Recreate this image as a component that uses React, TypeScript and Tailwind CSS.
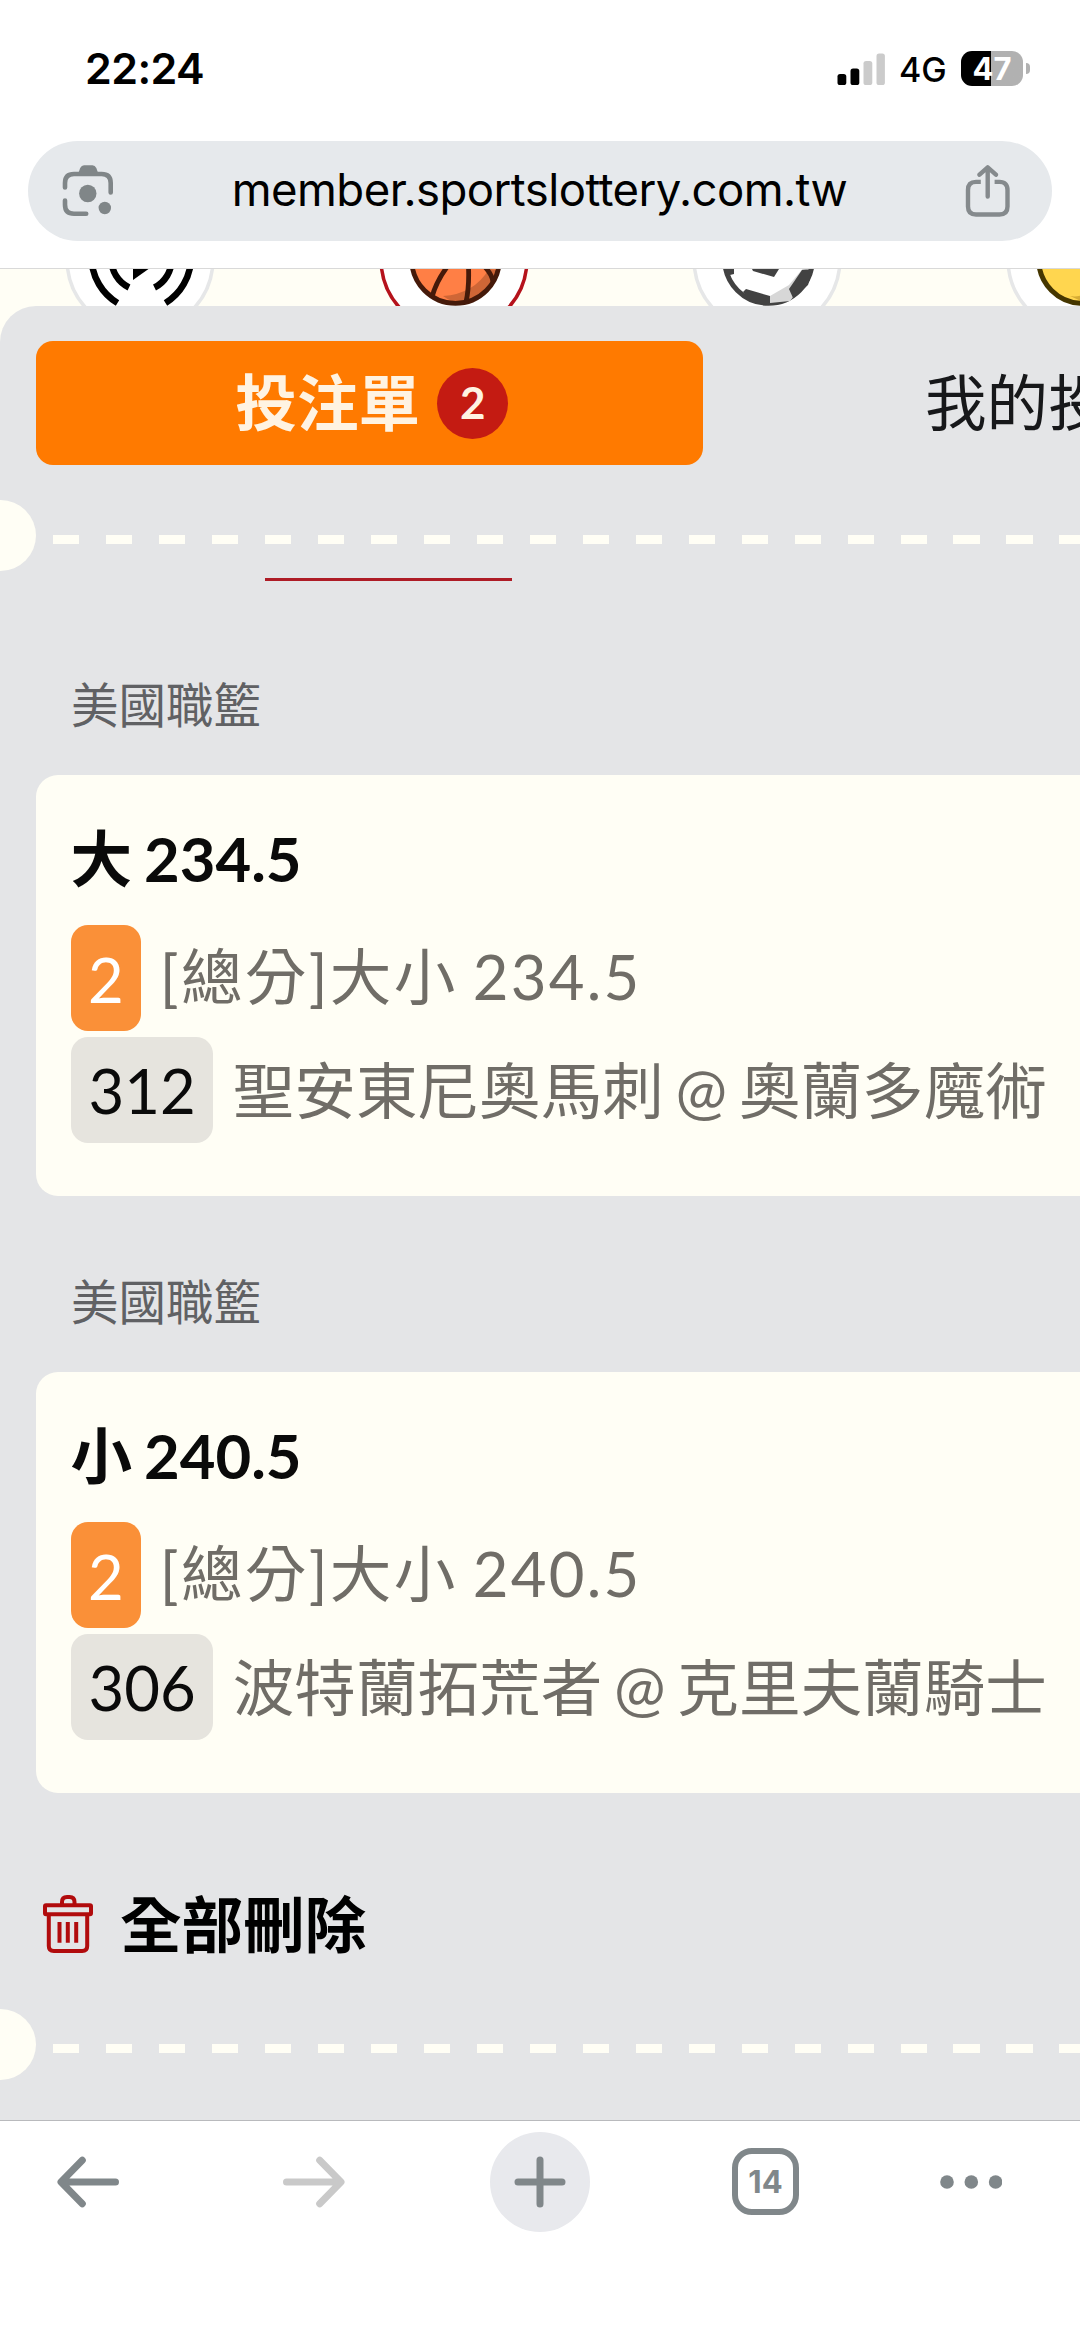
import type { ReactNode } from "react";

type Bet = {
  league: string;
  pick: string;
  count: number;
  market: string;
  code: string;
  match: string;
};

const BETS: Bet[] = [
  {
    league: "美國職籃",
    pick: "大 234.5",
    count: 2,
    market: "[總分]大小 234.5",
    code: "312",
    match: "聖安東尼奧馬刺 @ 奧蘭多魔術",
  },
  {
    league: "美國職籃",
    pick: "小 240.5",
    count: 2,
    market: "[總分]大小 240.5",
    code: "306",
    match: "波特蘭拓荒者 @ 克里夫蘭騎士",
  },
];

const StatusBar = () => (
  <div className="flex h-[141px] items-start justify-between pt-[46px] pr-[50px] pl-[85px] text-black">
    <span className="text-[43px] leading-[45px] font-semibold tracking-[-0.6px]">22:24</span>
    <div className="flex h-[45px] items-center">
      <svg width="48" height="32" viewBox="0 0 48 32">
        <rect x="0.5" y="21" width="8.8" height="11" rx="2.6" />
        <rect x="13.5" y="15.5" width="8.8" height="16.5" rx="2.6" />
        <rect x="26.5" y="8" width="8.8" height="24" rx="2.6" fill="#cbcbcb" />
        <rect x="39.5" y="0.5" width="8.4" height="31.5" rx="2.6" fill="#cbcbcb" />
      </svg>
      <span className="ml-[14px] w-[48px] pt-[3px] text-[34px] leading-none font-medium">4G</span>
      <div className="ml-[14px] flex h-[35px] w-[62px] items-center justify-center rounded-[11px] bg-linear-to-r from-black from-[49%] to-[#b1b1b1] to-[49%] text-[31px] leading-none font-bold text-white">
        47
      </div>
      <div className="ml-[3px] h-[11px] w-[4px] rounded-r-full bg-[#b1b1b1]" />
    </div>
  </div>
);

const LensIcon = () => (
  <svg width="52" height="52" viewBox="0 0 52 52" fill="none" stroke="#808688" strokeWidth="4.6" strokeLinecap="round">
    <path d="M3 22.5V18Q3 9 12 9H39.600Q48.700 9 48.700 18V27.500" />
    <path d="M3 35.500V39.800Q3 48.800 12 48.800H24.200" />
    <path d="M15.500 10.500L18.200 3Q19.500 .3 22 .3H30.500Q33 .3 34.300 3L37 10.500Z" fill="#808688" stroke="none" />
    <circle cx="25.800" cy="28.500" r="8.700" fill="#808688" stroke="none" />
    <circle cx="42.800" cy="43" r="6.200" fill="#808688" stroke="none" />
  </svg>
);

const ShareIcon = () => (
  <svg width="46" height="53" viewBox="0 0 46 53" fill="none" stroke="#858a8d" strokeWidth="4.4" strokeLinecap="round">
    <path
      d="M15.800 16.900H11Q3 16.900 3 25V41.500Q3 49.500 11 49.500H34.500Q42.500 49.500 42.500 41.500V25Q42.500 16.900 34.500 16.900H29.600"
      strokeLinecap="butt"
    />
    <path d="M22.700 3V31.500M14.500 9.700L22.700 2.300L30.900 9.700" strokeLinejoin="round" />
  </svg>
);

const AddressBar = () => (
  <div className="mx-[28px] flex h-[100px] items-center justify-between rounded-full bg-[#e6e9ec] pr-[41px] pl-[34px]">
    <LensIcon />
    <span className="pb-[2px] text-[45.500px] leading-none tracking-[-0.540px] text-black">
      member.sportslottery.com.tw
    </span>
    <ShareIcon />
  </div>
);

// Round sport button, only its lower edge shows under the address bar
const SportButton = ({ active = false, children }: { active?: boolean; children: ReactNode }) => (
  <svg width="150" height="37" viewBox="0 85 150 37" className="shrink-0">
    <circle cx="75" cy="75" r="73" fill="#fff" stroke={active ? "#b5121b" : "#e6e7e8"} strokeWidth="3.500" />
    {children}
  </svg>
);

const SportsStrip = () => (
  <div className="flex h-[38px] gap-[163.500px] overflow-hidden border-t border-[#d9d9d9] bg-[#fffef5] pl-[65px]">
    <SportButton>
      <g fill="none" stroke="#000" strokeWidth="6.500">
        <path d="M26.500 75A54 54 0 0 0 52.500 119" />
        <path d="M126 75A54 54 0 0 1 100.500 119" />
        <path d="M46.500 75A31 31 0 0 0 64 103.500" />
        <path d="M106.500 75A31 31 0 0 1 89.500 103.500" />
      </g>
      <path d="M68 55V96L92 79Z" />
    </SportButton>
    <SportButton active>
      <circle cx="76.500" cy="75.500" r="43.800" fill="#ff7f45" />
      <path d="M110 85Q95 110 64 112Q72 118 80 118Q112 114 118 86Z" fill="#cf6636" />
      <g fill="none" stroke="#451a0a" strokeWidth="4.800">
        <circle cx="76.500" cy="75.500" r="43.800" />
        <path d="M68 83Q57 98 53 113" />
        <path d="M89 75Q91 100 87 118" />
        <path d="M105 82Q113 90 114 98" />
      </g>
    </SportButton>
    <SportButton>
      <circle cx="76.500" cy="75.500" r="43.800" fill="#fff" stroke="#424242" strokeWidth="5" />
      <path d="M78 112L97 101L113 82L118 92L98 117L78 119Z" fill="#d7d7d7" />
      <path d="M60 85H87L82 93L61 87Z" fill="#424242" />
      <path d="M32 85H42V90L38 91L42 103Z" fill="#424242" />
      <path d="M54 105L78 112V121L60 118L51 108Z" fill="#424242" />
      <path d="M97 105L110 86L121 85L116 101L101 114Z" fill="#424242" />
    </SportButton>
    <SportButton>
      <circle cx="76.500" cy="75.500" r="43.800" fill="#ffd64f" />
      <path d="M64 112Q76 114 84 106V121Z" fill="#d6ac35" />
      <circle cx="76.500" cy="75.500" r="43.800" fill="none" stroke="#453600" strokeWidth="5" />
    </SportButton>
  </div>
);

// Ticket style divider with a half circle notch on the left edge
const TicketDivider = () => (
  <div className="flex h-[71px] items-center">
    <div className="h-[71px] w-[35.500px] shrink-0 rounded-r-full bg-[#fffef5]" />
    <div className="mt-[8px] ml-[17px] h-[9px] flex-1 bg-[repeating-linear-gradient(90deg,#fffef5_0_26.500px,transparent_26.500px_52.970px)]" />
  </div>
);

const BetCard = ({ bet }: { bet: Bet }) => (
  <section className="h-[597.300px] pl-[35.500px]">
    <h3 className="h-[100px] pl-[35.500px] text-[47.500px] leading-[60px] text-[#606164]">{bet.league}</h3>
    <div className="h-[420.500px] rounded-l-[22px] bg-[#fffef5] pt-[52px] pl-[35px]">
      <p className="text-[61.600px] leading-[62px] font-bold [word-spacing:-3px] text-[#0a0a0a]">{bet.pick}</p>
      <div className="mt-[36px] flex h-[106px] items-center">
        <span className="rounded-[17px] bg-[#fa9038] px-[17.500px] pt-[2px] text-[61.600px] leading-[104px] text-white">
          {bet.count}
        </span>
        <span className="ml-[18.500px] pb-[4px] text-[61.600px] leading-[102px] tracking-[2.300px] [word-spacing:-3px] whitespace-nowrap text-[#706d67]">
          {bet.market}
        </span>
      </div>
      <div className="mt-[6px] flex h-[106px] items-center">
        <span className="rounded-[17px] bg-[#e6e4de] pr-[17px] pl-[18px] text-[61.600px] leading-[106px] text-[#0a0a0a]">
          {bet.code}
        </span>
        <span className="ml-[20px] text-[61.600px] leading-[106px] [word-spacing:-4px] whitespace-nowrap text-[#706d67]">
          {bet.match}
        </span>
      </div>
    </div>
  </section>
);

const TrashIcon = () => (
  <svg width="50" height="58" viewBox="0 0 50 58" fill="none" stroke="#b10b0d" strokeWidth="4">
    <path d="M19 10V7Q19 2 24 2H26.500Q31.500 2 31.500 7V10" />
    <rect x="2" y="10.300" width="46" height="9" rx="1" />
    <path d="M5.800 19.300V51Q5.800 56 10.800 56H39.200Q44.200 56 44.200 51V19.300" />
    <path d="M16.500 27V47.700M24.800 27V47.700M33.200 27V47.700" />
  </svg>
);

const BetSlip = () => (
  <main className="h-[1814px] overflow-hidden bg-[#fffef5] font-['Lato','Noto_Sans_CJK_TC',sans-serif]">
    <div className="h-full rounded-tl-[36px] bg-[#e4e5e7] pt-[35px]">
      <div className="flex h-[124px] pl-[35.500px]">
        <button className="flex w-[667.500px] shrink-0 items-center justify-center rounded-[17px] bg-[#ff7a00] pl-[5px] text-[#fff3e2]">
          <span className="text-[61.600px] leading-none font-bold">投注單</span>
          <span className="ml-[17px] flex h-[71px] w-[71px] items-center justify-center rounded-full bg-[#c41b12] pb-[2px] text-[44px] leading-none font-bold">
            2
          </span>
        </button>
        <button className="ml-[222px] shrink-0 text-[61.600px] leading-none whitespace-nowrap text-[#17181a]">
          我的投注
        </button>
      </div>

      <div className="mt-[35px]">
        <TicketDivider />
      </div>
      <div className="mt-[7px] ml-[265px] h-[3px] w-[247px] bg-[#ae1c26]" />

      <div className="pt-[94px]">
        {BETS.map((bet) => (
          <BetCard key={bet.code} bet={bet} />
        ))}
      </div>

      <button className="mt-[23px] flex h-[62px] items-center pl-[43px]">
        <TrashIcon />
        <span className="ml-[27px] text-[61.600px] leading-[62px] font-bold text-black">全部刪除</span>
      </button>

      <div className="mt-[54px]">
        <TicketDivider />
      </div>
    </div>
  </main>
);

const Arrow = ({ className }: { className?: string }) => (
  <svg width="62" height="52" viewBox="0 0 62 52" fill="none" stroke="currentColor" strokeWidth="7" strokeLinecap="round" strokeLinejoin="round" className={className}>
    <path d="M58.500 26H4.500M25.300 4.200L4 26L25.300 47.800" />
  </svg>
);

const Toolbar = () => (
  <nav className="flex h-[217px] items-start border-t border-[#b9babd] bg-white pl-[57px]">
    <div className="flex h-[121px] items-center text-[#80878a]">
      <Arrow />
      <Arrow className="ml-[164px] -scale-x-100 text-[#c9c9c9]" />
      <div className="ml-[145px] flex h-[100px] w-[100px] items-center justify-center rounded-full bg-[#e8e9ed]">
        <svg width="52" height="52" viewBox="0 0 52 52" stroke="currentColor" strokeWidth="7" strokeLinecap="round">
          <path d="M4 26H48M26 4V48" />
        </svg>
      </div>
      <div className="ml-[142px] flex h-[67px] w-[67px] items-center justify-center rounded-[20px] border-[6px] border-current text-[31px] leading-none font-bold">
        14
      </div>
      <svg width="62" height="14" viewBox="0 0 62 14" fill="currentColor" className="ml-[141px]">
        <circle cx="7" cy="7" r="6.800" />
        <circle cx="31.300" cy="7" r="6.800" />
        <circle cx="55.600" cy="7" r="6.800" />
      </svg>
    </div>
  </nav>
);

export default function App() {
  return (
    <div className="flex h-[2337px] w-[1080px] flex-col overflow-hidden bg-white font-['Inter','Noto_Sans_CJK_TC',sans-serif]">
      <StatusBar />
      <AddressBar />
      <div className="h-[27px] shrink-0" />
      <SportsStrip />
      <BetSlip />
      <Toolbar />
    </div>
  );
}
